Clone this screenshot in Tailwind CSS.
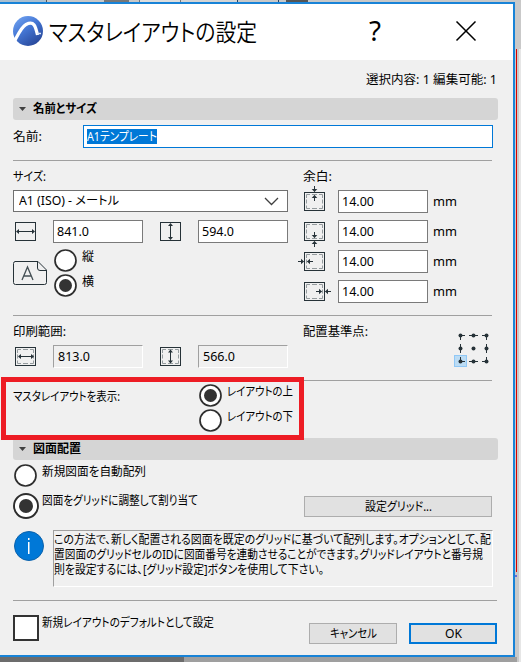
<!DOCTYPE html>
<html lang="ja">
<head>
<meta charset="utf-8">
<title>マスタレイアウトの設定</title>
<script src="https://cdn.jsdelivr.net/npm/@tailwindcss/browser@4"></script>
</head>
<body class="relative w-[521px] h-[662px] overflow-hidden bg-[#c9c9c9] text-black text-[12px] leading-[16px] font-['Noto_Sans','Noto_Sans_CJK_JP',sans-serif]">
<svg width="0" height="0" class="absolute">
  <defs>
    <g id="frame"><rect x="6.5" y="6.5" width="20" height="18" fill="none" stroke="#263238"/></g>
    <g id="dash" fill="none" stroke="#949b9e"><path d="M8.500 12V8.500H12M14 8.500h5M21 8.500h3.500V12M24.500 13.500v4M24.500 19.500v3H21M19 22.500h-5M12 22.500H8.500v-3M8.500 17.500v-4"/></g>
    <g id="arrowR"><path d="M0 .5H5.500" stroke="#263238" fill="none"/><path d="M3 -2.300L6 .5L3 3.300Z" fill="#263238"/></g>
    <g id="radio"><circle cx="11.5" cy="11.500" r="10.500" fill="#fff" stroke="#2d2d2d" stroke-width="1.700"/></g>
  </defs>
</svg>

<!-- application window behind the dialog -->
<div class="absolute left-0 top-0 w-[521px] h-[2px] flex bg-[#c8c8c8]">
  <div class="w-[46px] bg-[#a9bfd0]"></div><div class="w-[58px] border-l border-[#555]"></div><div class="w-[25px] bg-[#777]"></div><div class="w-[10px]"></div><div class="w-[41px] border-l border-[#777] bg-[#ddd]"></div><div class="w-[57px] border-l border-[#777] bg-[#d4d4d4]"></div><div class="w-[41px] border-l border-[#246]"></div><div class="w-[8px] border-l border-[#246]"></div><div class="w-[22px] bg-[#555]"></div>
</div>
<div class="absolute left-[515px] top-[49px] w-[2px] h-[523px] border-r border-[#d80000]"></div>
<div class="absolute left-[515px] top-[575px] w-[2px] h-[2px] bg-[#6b6bd8]"></div>
<div class="absolute left-[519px] top-[49px] w-[2px] h-[613px] bg-[#e6e6e6]"></div>
<div class="absolute left-0 top-[657px] w-[517px] h-[5px] flex bg-[#9f9f9f]"><div class="w-[184px] bg-[#6c6c6c]"></div></div>

<main class="absolute left-0 top-[2px] w-[515px] h-[655px] border-y-2 border-r-2 border-[#1883d7] bg-[#f0f0f0] flex flex-col">
  <header class="h-[56px] shrink-0 bg-white flex items-start">
    <svg class="ml-[12px] mt-[10px]" width="32" height="34" viewBox="0 0 32 34">
      <defs><linearGradient id="lg" x1="0" y1="0" x2=".7" y2="1"><stop offset="0" stop-color="#78aaf5"/><stop offset=".5" stop-color="#4476d4"/><stop offset="1" stop-color="#28489a"/></linearGradient></defs>
      <circle cx="16" cy="17" r="15" fill="url(#lg)"/>
      <path d="M1.500 29C5 23 9 13 14 10.500C22 6.500 23.500 12 25.500 21" fill="none" stroke="#fff" stroke-width="3.200"/>
      <path d="M0 26L0 34L6 32L3.500 26Z" fill="#fff"/><path d="M25 19.500h4" stroke="#dfe8fb" stroke-width="1.500"/>
    </svg>
    <h1 class="ml-[5px] mt-[12px] text-[24px] leading-[32px] font-[350]" data-w="208">マスタレイアウトの設定</h1>
    <div class="ml-[112px] mt-[11px] text-[27px] leading-[32px]" data-w="12">?</div>
    <svg class="ml-[74px] mt-[17px]" width="22" height="21" viewBox="0 0 22 21"><path d="M1.500 .5L20.500 19.500M20.500 .5L1.500 19.500" stroke="#000" stroke-width="1.500"/></svg>
  </header>
  <div class="h-[38px] shrink-0 flex items-center justify-end pt-px pr-[16px]"><span data-w="131">選択内容: 1 編集可能: 1</span></div>

  <section class="px-[13px] shrink-0 h-[340px]">
    <h2 class="w-[485px] h-[22px] rounded-[3px] bg-[#d5d5d5] flex items-center font-bold"><svg class="ml-[6px] mr-[7px]" width="7" height="4"><path d="M0 0h7L3.500 4Z" fill="#404040"/></svg><span data-w="64">名前とサイズ</span></h2>
    <div class="mt-[5px] h-[23px] flex items-center"><span class="mr-[41px]" data-w="29">名前:</span><div class="w-[410px] h-[23px] bg-white border border-[#0078d7] flex items-center pl-[3px]"><div class="h-[15px] w-[70px] bg-[#0078d7] text-white leading-[15px]"><span data-w="70">A1テンプレート</span></div></div></div>
    <div class="mt-[12px] w-[479px] h-px bg-[#a0a0a0]"></div>

    <div class="flex h-[154px]">
      <div class="w-[290px] pt-[8px]">
        <div><span data-w="33">サイズ:</span></div>
        <div class="mt-[5px] w-[275px] h-[22px] bg-white border border-[#707070] flex items-center justify-between pl-[5px] pr-[8px]"><span data-w="100">A1 (ISO) - メートル</span><svg width="15" height="9"><path d="M1 1L7.500 7.500L14 1" fill="none" stroke="#404040" stroke-width="1.300"/></svg></div>
        <div class="mt-[8px] flex h-[23px]">
          <svg class="-ml-[4px]" width="44" height="28" viewBox="0 4 44 28"><use href="#frame"/><path d="M8 15.500h17" stroke="#263238"/><path d="M7 15.500l3-2.500v5zM26 15.500l-3-2.500v5z" fill="#263238"/></svg>
          <div class="w-[90px] border border-[#7a7a7a] bg-white pl-[3px] flex items-center"><span data-w="32">841.0</span></div>
          <svg class="ml-[11px]" width="44" height="28" viewBox="0 4 44 28"><use href="#frame"/><path d="M16.500 8v15" stroke="#263238"/><path d="M16.500 7l-2.500 3h5zM16.500 24l-2.500-3h5z" fill="#263238"/></svg>
          <div class="w-[90px] border border-[#7a7a7a] bg-white pl-[3px] flex items-center"><span data-w="32">594.0</span></div>
        </div>
        <div class="mt-[6px] flex">
          <svg class="mt-[12px]" width="35" height="25" viewBox="0 0 35 25" fill="none" stroke="#263238"><path d="M2 .5H25L33.500 9V21.500Q33.500 23.500 31.500 23.500H2.500Q.5 23.500 .5 21.500V2.500Q.5 .5 2.500 .5M24.500 .5V7Q24.500 9.500 27 9.500H33.500"/><path d="M9 19L14.500 6L20 19M11 15h7" stroke="#455055" stroke-width="1.300"/></svg>
          <div class="ml-[6px] flex flex-col gap-[2px]">
            <div class="flex h-[23px]"><svg width="23" height="23"><use href="#radio"/></svg><span class="ml-[5px]" data-w="12">縦</span></div>
            <div class="flex h-[23px]"><svg width="23" height="23"><use href="#radio"/><circle cx="11.500" cy="11.500" r="6.500" fill="#333"/></svg><span class="ml-[5px]" data-w="12">横</span></div>
          </div>
        </div>
      </div>
      <div class="pt-[8px]">
        <div><span data-w="29">余白:</span></div>
        <div class="mt-[5px] flex flex-col gap-[7px] -ml-[5px]">
          <div class="flex h-[23px]"><svg class="-mt-[4px] mr-[8px]" width="32" height="31"><use href="#frame"/><use href="#dash"/><use href="#arrowR" transform="translate(17 0) rotate(90)"/><use href="#arrowR" transform="translate(16 15) rotate(-90)"/></svg><div class="w-[90px] border border-[#7a7a7a] bg-white pl-[3px] flex items-center"><span data-w="32">14.00</span></div><span class="ml-[5px] mt-[4px]" data-w="24">mm</span></div>
          <div class="flex h-[23px]"><svg class="-mt-[4px] mr-[8px]" width="32" height="31"><use href="#frame"/><use href="#dash"/><use href="#arrowR" transform="translate(17 16) rotate(90)"/><use href="#arrowR" transform="translate(16 31) rotate(-90)"/></svg><div class="w-[90px] border border-[#7a7a7a] bg-white pl-[3px] flex items-center"><span data-w="32">14.00</span></div><span class="ml-[5px] mt-[4px]" data-w="24">mm</span></div>
          <div class="flex h-[23px]"><svg class="-mt-[4px] mr-[8px]" width="32" height="31"><use href="#frame"/><use href="#dash"/><use href="#arrowR" transform="translate(0 15)"/><use href="#arrowR" transform="translate(15 16) rotate(180)"/></svg><div class="w-[90px] border border-[#7a7a7a] bg-white pl-[3px] flex items-center"><span data-w="32">14.00</span></div><span class="ml-[5px] mt-[4px]" data-w="24">mm</span></div>
          <div class="flex h-[23px]"><svg class="-mt-[4px] mr-[8px] overflow-visible" width="32" height="31"><use href="#frame"/><use href="#dash"/><use href="#arrowR" transform="translate(18 15)"/><use href="#arrowR" transform="translate(33 16) rotate(180)"/></svg><div class="w-[90px] border border-[#7a7a7a] bg-white pl-[3px] flex items-center"><span data-w="32">14.00</span></div><span class="ml-[5px] mt-[4px]" data-w="24">mm</span></div>
        </div>
      </div>
    </div>
    <div class="w-[479px] h-px bg-[#a0a0a0]"></div>

    <div class="flex h-[64px]">
      <div class="w-[290px] pt-[8px]">
        <div><span data-w="53">印刷範囲:</span></div>
        <div class="mt-[5px] flex h-[23px]">
          <svg class="-ml-[4px]" width="44" height="28" viewBox="0 4 44 28"><use href="#frame"/><use href="#dash"/><path d="M10 15.500h14" stroke="#263238"/><path d="M9 15.500l3-2.500v5zM25 15.500l-3-2.500v5z" fill="#263238"/></svg>
          <div class="w-[90px] border border-t-[#a0a0a0] border-l-[#a0a0a0] border-r-white border-b-white pl-[4px] flex items-center"><span data-w="32">813.0</span></div>
          <svg class="ml-[11px]" width="44" height="28" viewBox="0 4 44 28"><use href="#frame"/><use href="#dash"/><path d="M16.500 10v11" stroke="#263238"/><path d="M16.500 8.500l-2.500 3h5zM16.500 22.500l-2.500-3h5z" fill="#263238"/></svg>
          <div class="w-[90px] border border-t-[#a0a0a0] border-l-[#a0a0a0] border-r-white border-b-white pl-[4px] flex items-center"><span data-w="32">566.0</span></div>
        </div>
      </div>
      <span class="mt-[8px]" data-w="65">配置基準点:</span>
      <svg class="ml-[86px] mt-[15px]" width="38" height="38" viewBox="454 331 38 38"><rect x="454.500" y="355.500" width="12" height="11" fill="#bcdcf4" stroke="#90c8f6"/><g fill="#263238"><circle cx="460.500" cy="335.500" r="2"/><circle cx="473.500" cy="335.500" r="2"/><circle cx="486.500" cy="335.500" r="2"/><circle cx="460.500" cy="348.500" r="2"/><circle cx="473.500" cy="348.500" r="2"/><circle cx="486.500" cy="348.500" r="2"/><circle cx="460.500" cy="361.500" r="2"/><circle cx="473.500" cy="361.500" r="2"/><circle cx="486.500" cy="361.500" r="2"/></g><path d="M460 335.500h5M469 335.500h9M482 335.500h5M460 361.500h5M469 361.500h9M482 361.500h5M460.500 335v5M460.500 344v9M460.500 357v5M486.500 335v5M486.500 344v9M486.500 357v5" stroke="#263238" fill="none"/></svg>
    </div>
    <div class="w-[479px] h-px bg-[#a0a0a0]"></div>
    <div class="mt-[3px] flex h-[54px]">
      <span class="mt-[5px]" data-w="107">マスタレイアウトを表示:</span>
      <div class="ml-[79px] flex flex-col gap-[2px]">
        <div class="flex h-[23px]"><svg width="23" height="23"><use href="#radio"/><circle cx="11.500" cy="11.500" r="6.500" fill="#333"/></svg><span class="ml-[5px]" data-w="66">レイアウトの上</span></div>
        <div class="flex h-[23px]"><svg width="23" height="23"><use href="#radio"/></svg><span class="ml-[5px]" data-w="66">レイアウトの下</span></div>
      </div>
    </div>
  </section>

  <section class="px-[13px] flex-1">
    <h2 class="w-[485px] h-[22px] rounded-[3px] bg-[#d5d5d5] flex items-center font-bold"><svg class="ml-[6px] mr-[7px]" width="7" height="4"><path d="M0 0h7L3.500 4Z" fill="#404040"/></svg><span data-w="48">図面配置</span></h2>
    <div class="mt-[4px] flex h-[23px] pl-px"><svg width="23" height="23"><use href="#radio"/></svg><span class="ml-[5px]" data-w="104">新規図面を自動配列</span></div>
    <div class="mt-[6px] flex h-[26px]"><svg width="26" height="26"><circle cx="13" cy="13" r="12" fill="#fff" stroke="#2d2d2d" stroke-width="1.900"/><circle cx="13" cy="13" r="7" fill="#333"/></svg><span class="ml-[3px]" data-w="156">図面をグリッドに調整して割り当て</span><button class="ml-auto mr-[8px] mt-[3px] w-[188px] h-[21px] border border-[#adadad] bg-[#e1e1e1] flex items-center justify-center"><span data-w="67">設定グリッド...</span></button></div>
    <div class="mt-[11px] h-[57px] flex">
      <svg width="32" height="32" class="mr-[8px]"><circle cx="16" cy="16" r="14.500" fill="#0078d7" stroke="#0c62ab"/><rect x="15" y="12" width="1.500" height="12" fill="#fff"/><rect x="15" y="8" width="1.500" height="2" fill="#fff"/></svg>
      <div class="w-[440px] h-[57px] border border-t-[#a0a0a0] border-l-[#a0a0a0] border-r-white border-b-white leading-[15px] pt-px">
        <div><span data-w="437">この方法で、新しく配置される図面を既定のグリッドに基づいて配列します。オプションとして、配</span></div>
        <div><span data-w="429">置図面のグリッドセルのIDに図面番号を連動させることができます。グリッドレイアウトと番号規</span></div>
        <div><span data-w="270">則を設定するには、[グリッド設定]ボタンを使用して下さい。</span></div>
      </div>
    </div>
    <div class="mt-[13px] w-[484px] h-px bg-[#a0a0a0]"></div>
    <div class="mt-[14px] flex h-[30px]">
      <div class="w-[26px] h-[26px] border-2 border-[#333] bg-white"></div><span class="ml-[3px]" data-w="172">新規レイアウトのデフォルトとして設定</span>
      <button class="ml-[95px] mt-[8px] w-[88px] h-[21px] border border-[#adadad] bg-[#e1e1e1] flex items-center justify-center"><span data-w="47">キャンセル</span></button>
      <button class="ml-[12px] mt-[8px] w-[88px] h-[21px] border-2 border-[#0078d7] bg-[#e1e1e1] flex items-center justify-center"><span data-w="17">OK</span></button>
    </div>
  </section>
</main>
<!-- highlight around the display option -->
<div class="absolute left-[1px] top-[377px] w-[303px] h-[63px] border-[5px] border-[#ed1c24]"></div>
<script>
// Condense each label horizontally to its designed width, like a narrow UI kana face.
function fitLabels() {
  document.querySelectorAll('[data-w]').forEach(function (el) {
    var w = +el.dataset.w;
    el.style.transform = 'none';
    el.style.display = 'block';
    el.style.whiteSpace = 'nowrap';
    el.style.flex = 'none';
    el.style.fontFeatureSettings = '"palt"';
    el.style.textAlign = 'left';
    el.style.width = 'max-content';
    var n = el.getBoundingClientRect().width;
    el.style.width = w + 'px';
    el.style.transformOrigin = '0 50%';
    el.style.transform = 'scaleX(' + w / n + ')';
  });
}
fitLabels();
window.addEventListener('load', function () {
  fitLabels();
  requestAnimationFrame(fitLabels);
  document.fonts.ready.then(fitLabels);
});
</script>
</body>
</html>
